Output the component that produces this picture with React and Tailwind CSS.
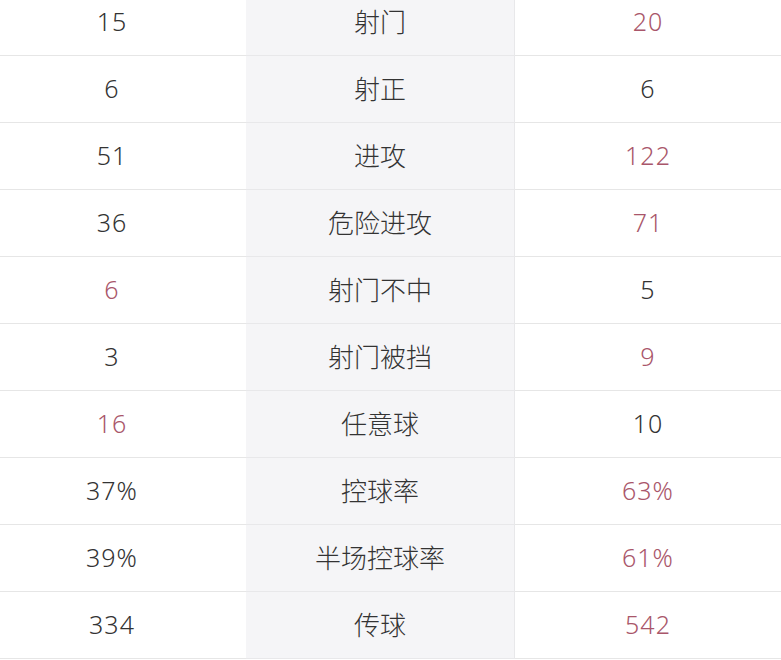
import React from "react";

const rows = [
  ["15", "射门", "20", "r"],
  ["6", "射正", "6", ""],
  ["51", "进攻", "122", "r"],
  ["36", "危险进攻", "71", "r"],
  ["6", "射门不中", "5", "l"],
  ["3", "射门被挡", "9", "r"],
  ["16", "任意球", "10", "l"],
  ["37%", "控球率", "63%", "r"],
  ["39%", "半场控球率", "61%", "r"],
  ["334", "传球", "542", "r"],
];

export default function App() {
  return (
    <div
      className="w-[781px] h-[660px] overflow-hidden bg-white font-light"
      style={{ fontFamily: '"Noto Sans", "Noto Sans CJK SC", sans-serif' }}
    >
      <div className="-mt-[11px]">
        {rows.map(([l, m, r, hi], i) => (
          <div key={i} className="flex h-[67px]">
            <div
              className={`w-[246px] pr-[22px] flex items-center justify-center border-b border-[#e6e6e6] text-[25px] tracking-[1px] ${
                hi === "l" ? "text-[#a9566a]" : "text-[#333333]"
              }`}
            >
              {l}
            </div>
            <div className="w-[269px] flex items-center justify-center bg-[#f5f5f7] border-b border-r border-[#e8e8ea] text-[26px] text-[#333333]">
              {m}
            </div>
            <div
              className={`flex-1 flex items-center justify-center border-b border-[#e6e6e6] text-[25px] tracking-[1px] ${
                hi === "r" ? "text-[#a9566a]" : "text-[#333333]"
              }`}
            >
              {r}
            </div>
          </div>
        ))}
      </div>
    </div>
  );
}
